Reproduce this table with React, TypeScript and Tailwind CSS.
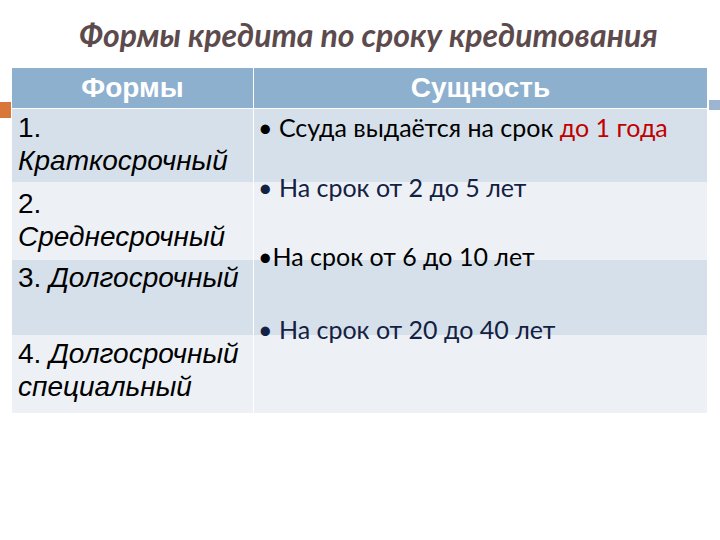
const ROW_BG = ['bg-[#d6e0ea]', 'bg-[#edf1f6]', 'bg-[#d6e0ea]', 'bg-[#edf1f6]'];
const ROW_START = ['row-start-2', 'row-start-3', 'row-start-4', 'row-start-5'];

export default function App() {
    return (
        <div className="relative w-[720px] h-[540px] bg-white overflow-hidden">
            {/* slide decorations */}
            <div className="absolute left-0 top-[102px] w-[11px] h-[16px] bg-[#d9773b]" />
            <div className="absolute left-[709px] top-[100px] w-[11px] h-[10px] bg-[#9cb6d1]" />

            <h1 className="pt-[16px] pl-[79px] text-[32px] leading-[38px] font-bold italic text-[#5c4a4c] font-['Lato',sans-serif]">
                Формы кредита по сроку кредитования
            </h1>

            <div className="mt-[14px] ml-[12px] grid grid-cols-[241px_453px] grid-rows-[41px_73px_78px_75px_78px] gap-x-px">
                <div className="col-start-1 row-start-1 bg-[#8eb0cf] border-b border-white flex items-center justify-center">
                    <span className="text-[28px] font-bold text-white font-['Liberation_Sans',sans-serif]">Формы</span>
                </div>
                <div className="col-start-2 row-start-1 bg-[#8eb0cf] border-b border-white flex items-center justify-center">
                    <span className="text-[28px] font-bold text-white font-['Liberation_Sans',sans-serif]">Сущность</span>
                </div>

                {ROW_BG.map((bg, i) => (
                    <div key={`l${i}`} className={`col-start-1 ${ROW_START[i]} ${bg}`} />
                ))}
                {ROW_BG.map((bg, i) => (
                    <div key={`r${i}`} className={`col-start-2 ${ROW_START[i]} ${bg}`} />
                ))}

                {/* left column text */}
                <div className="col-start-1 row-start-2 row-span-4 pl-[6px] text-[28px] leading-[33px] text-black font-['Liberation_Sans',sans-serif]">
                    <div className="mt-[2px]">
                        <p>1.</p>
                        <p className="italic">Краткосрочный</p>
                    </div>
                    <div className="mt-[10px]">
                        <p>2.</p>
                        <p className="italic">Среднесрочный</p>
                    </div>
                    <p className="mt-[8px]">3. <span className="italic">Долгосрочный</span></p>
                    <div className="mt-[43px]">
                        <p>4. <span className="italic">Долгосрочный</span></p>
                        <p className="italic">специальный</p>
                    </div>
                </div>

                {/* right column text */}
                <div className="col-start-2 row-start-2 row-span-4 pl-[4px] text-[25px] leading-[32px] font-['Lato',sans-serif]">
                    <p className="mt-[2px] text-black">
                        • Ссуда выдаётся на срок <span className="text-[#c00000]">до 1 года</span>
                    </p>
                    <p className="mt-[28px] text-[#132142]">• На срок от 2 до 5 лет</p>
                    <p className="mt-[37px] text-black">•На срок от 6 до 10 лет</p>
                    <p className="mt-[41px] text-[#132142]">• На срок от 20 до 40 лет</p>
                </div>
            </div>
        </div>
    );
}
